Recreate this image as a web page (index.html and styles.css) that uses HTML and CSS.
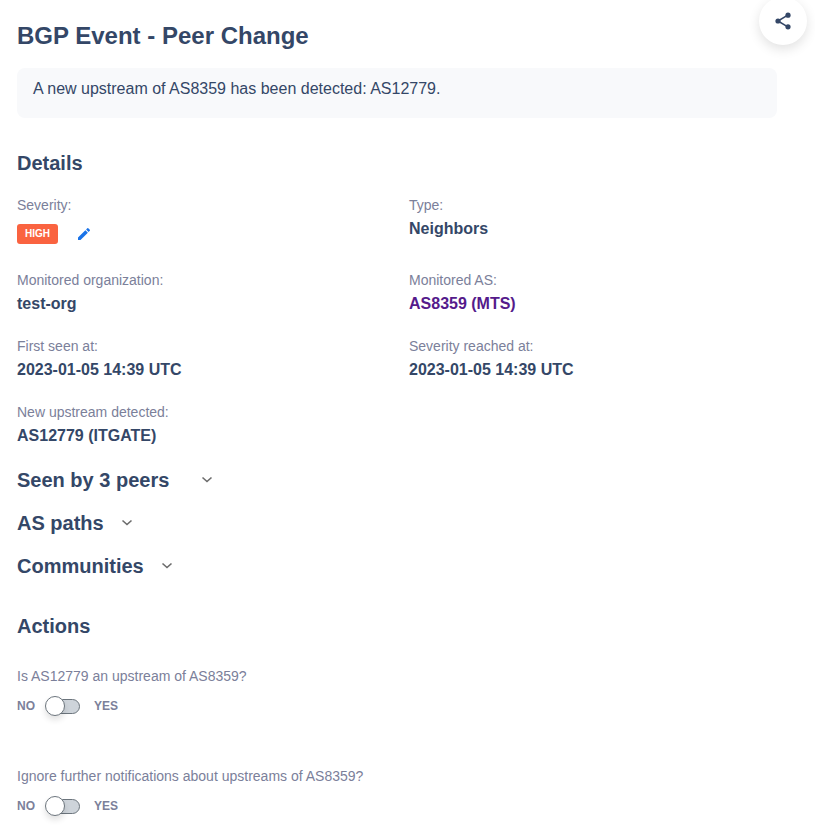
FILE: index.html
```html
<!DOCTYPE html>
<html lang="en">
<head>
  <meta charset="UTF-8">
  <title>BGP Event - Peer Change</title>
  <meta name="viewport" content="width=device-width, initial-scale=1.0">
  <link rel="stylesheet" href="styles.css">
</head>
<body>

  <button class="share" type="button" aria-label="Share">
    <svg width="20" height="20" viewBox="0 0 20 20">
      <path d="M5 10 L14.8 4.2 M5 10 L14.8 15.8" fill="none" stroke="currentColor" stroke-width="1.5"/>
      <circle cx="5" cy="10" r="2.6"/>
      <circle cx="15" cy="4.2" r="2.6"/>
      <circle cx="15" cy="15.8" r="2.6"/>
    </svg>
  </button>

  <main>
    <h1>BGP Event - Peer Change</h1>
    <p class="summary">A new upstream of AS8359 has been detected: AS12779.</p>

    <h2>Details</h2>
    <dl class="details">
      <div>
        <dt>Severity:</dt>
        <dd class="severity">
          <span class="badge">HIGH</span>
          <button class="edit" type="button" aria-label="Edit severity">
            <svg width="16" height="16" viewBox="0 0 24 24">
              <path d="M3 17.25V21h3.75L17.81 9.94l-3.75-3.75L3 17.25zM20.71 7.04a1 1 0 0 0 0-1.41l-2.34-2.34a1 1 0 0 0-1.41 0l-1.83 1.83 3.75 3.75 1.83-1.83z"/>
            </svg>
          </button>
        </dd>
      </div>
      <div>
        <dt>Type:</dt>
        <dd>Neighbors</dd>
      </div>
      <div>
        <dt>Monitored organization:</dt>
        <dd>test-org</dd>
      </div>
      <div>
        <dt>Monitored AS:</dt>
        <dd><a href="#as8359">AS8359 (MTS)</a></dd>
      </div>
      <div>
        <dt>First seen at:</dt>
        <dd>2023-01-05 14:39 UTC</dd>
      </div>
      <div>
        <dt>Severity reached at:</dt>
        <dd>2023-01-05 14:39 UTC</dd>
      </div>
      <div>
        <dt>New upstream detected:</dt>
        <dd>AS12779 (ITGATE)</dd>
      </div>
    </dl>

    <div class="panels">
      <button class="panel panel-count" type="button" aria-expanded="false">
        <span>Seen by 3 peers</span>
        <svg width="12" height="8" viewBox="0 0 12 8"><path d="M1.5 1.5 L6 5.5 L10.5 1.5"/></svg>
      </button>
      <button class="panel" type="button" aria-expanded="false">
        <span>AS paths</span>
        <svg width="12" height="8" viewBox="0 0 12 8"><path d="M1.5 1.5 L6 5.5 L10.5 1.5"/></svg>
      </button>
      <button class="panel" type="button" aria-expanded="false">
        <span>Communities</span>
        <svg width="12" height="8" viewBox="0 0 12 8"><path d="M1.5 1.5 L6 5.5 L10.5 1.5"/></svg>
      </button>
    </div>

    <h2>Actions</h2>
    <div class="action">
      <label for="upstream">Is AS12779 an upstream of AS8359?</label>
      <div class="switch">
        <span>NO</span>
        <input id="upstream" type="checkbox">
        <span>YES</span>
      </div>
    </div>
    <div class="action">
      <label for="ignore">Ignore further notifications about upstreams of AS8359?</label>
      <div class="switch">
        <span>NO</span>
        <input id="ignore" type="checkbox">
        <span>YES</span>
      </div>
    </div>
  </main>

</body>
</html>
```
FILE: styles.css
```css
*, *::before, *::after {
  box-sizing: border-box;
}

body {
  margin: 0;
  background: #fff;
  color: #344767;
  font-family: "Liberation Sans", Arial, sans-serif;
  font-size: 16px;
  overflow-x: hidden;
}

main {
  padding: 20px 14px 0 17px;
}

h1, h2, p, dl, dd {
  margin: 0;
}

h1 {
  font-size: 24px;
  line-height: 32px;
}

h2 {
  font-size: 20px;
  line-height: 24px;
}

button {
  border: none;
  background: none;
  padding: 0;
  font-family: inherit;
  color: inherit;
  cursor: pointer;
}

/* floats over the top right corner */
.share {
  position: absolute;
  top: -3px;
  right: 8px;
  width: 48px;
  height: 48px;
  display: flex;
  align-items: center;
  justify-content: center;
  border-radius: 50%;
  background: #fff;
  box-shadow: 0 4px 12px rgba(0, 0, 0, 0.12);
}

.share svg {
  fill: currentColor;
}

.summary {
  margin: 16px 24px 33px 0;
  padding: 9px 16px 17px;
  line-height: 24px;
  border-radius: 8px;
  background: #f8f9fb;
}

.details {
  display: grid;
  grid-template-columns: 1fr 1fr;
  row-gap: 18px;
  margin-top: 20px;
}

dt, label {
  font-size: 14px;
  line-height: 20px;
  color: #7b809a;
}

dd {
  font-weight: bold;
  line-height: 28px;
}

dd a {
  color: #551a8b;
  text-decoration: none;
}

.severity {
  display: flex;
  align-items: center;
  gap: 18px;
  padding: 9px 0 8px;
}

.badge {
  padding: 0 8px;
  border-radius: 3px;
  background: #fa6340;
  color: #fff;
  font-size: 10px;
  line-height: 20px;
}

.edit {
  display: flex;
  fill: #1a73e8;
}

.panels {
  display: flex;
  flex-direction: column;
  align-items: flex-start;
  margin: 8px 0 26px;
}

.panel {
  display: flex;
  align-items: center;
  gap: 17px;
  padding: 10px 0;
  font-size: 20px;
  font-weight: bold;
  line-height: 24px;
}

.panel + .panel {
  padding-top: 9px;
}

.panel-count {
  gap: 32px;
}

.panel svg {
  fill: none;
  stroke: #6c6c6c;
  stroke-width: 1.6;
}

.action {
  height: 72px;
  margin: 28px 0;
}

.switch {
  display: flex;
  align-items: center;
  margin-top: 10px;
  font-size: 12px;
  font-weight: bold;
  color: #7b809a;
}

.switch input {
  appearance: none;
  position: relative;
  width: 35px;
  height: 20px;
  margin: 0 14px 0 10px;
  cursor: pointer;
}

/* track */
.switch input::before {
  content: "";
  position: absolute;
  inset: 3px 0 2px 6px;
  border: 1px solid #6c757d;
  border-radius: 8px;
  background: #ced4da;
}

/* knob */
.switch input::after {
  content: "";
  position: absolute;
  top: 0;
  left: 0;
  width: 20px;
  height: 20px;
  border: 1px solid #6c757d;
  border-radius: 50%;
  background: #fff;
  box-shadow: 0 4px 6px rgba(0, 0, 0, 0.12);
}

.switch input:checked::after {
  left: 15px;
}
```
